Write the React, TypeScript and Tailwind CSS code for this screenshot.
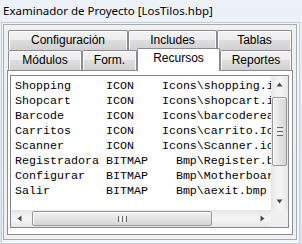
import type { ReactNode } from 'react';

const rows = [
  'Shopping     ICON    Icons\\shopping.ico',
  'Shopcart     ICON    Icons\\shopcart.ico',
  'Barcode      ICON    Icons\\barcodereader.ico',
  'Carritos     ICON    Icons\\carrito.Ico',
  'Scanner      ICON    Icons\\Scanner.ico',
  'Registradora BITMAP    Bmp\\Register.bmp',
  'Configurar   BITMAP    Bmp\\Motherboard.bmp',
  'Salir        BITMAP    Bmp\\aexit.bmp',
];

const tabBase =
  'h-[20px] shrink-0 border border-b-0 border-[#898c95] rounded-t-[2px] text-center text-[12px] leading-[19px] bg-[linear-gradient(to_bottom,#f3f3f3_0%,#ebebeb_50%,#dedede_50%,#d0d0d0_100%)] shadow-[inset_1px_1px_0_#fbfbfb,inset_-1px_0_0_#fbfbfb]';

function Tab({ className, children }: { className: string; children: ReactNode }) {
  return <div className={`${tabBase} ${className}`}>{children}</div>;
}

function Arrow({ dir }: { dir: 'up' | 'down' | 'left' | 'right' }) {
  const d = {
    up: 'M0.5 4.5 L3.5 0.5 L6.5 4.5 Z',
    down: 'M0.5 0.5 L3.5 4.5 L6.5 0.5 Z',
    left: 'M4.5 0.5 L0.5 3.5 L4.5 6.5 Z',
    right: 'M0.5 0.5 L4.5 3.5 L0.5 6.5 Z',
  }[dir];
  const vertical = dir === 'up' || dir === 'down';
  return (
    <svg width={vertical ? 7 : 5} height={vertical ? 5 : 7} viewBox={vertical ? '0 0 7 5' : '0 0 5 7'}>
      <path d={d} fill="#4a4a4a" />
    </svg>
  );
}

export default function App() {
  return (
    <div className="w-[302px] h-[244px] overflow-hidden bg-[linear-gradient(to_bottom,#edf2f8,#dde6f0)] font-['Liberation_Sans',Arial,sans-serif] text-black">
      <div className="h-[22px] pl-[3px] text-[11.5px] leading-[22px] whitespace-nowrap font-['Noto_Sans','Liberation_Sans',sans-serif]">
        Examinador de Proyecto [LosTilos.hbp]
      </div>

      <div className="ml-[1px] w-[299px] h-[222px] border border-[#c3cbd4] bg-[#f4f7fa] pt-[1px] pl-[1px] pr-[2px] pb-[3px]">
        <div className="h-full border border-[#a5abb2] bg-[#f0f0f0] pt-[5px] pl-[3px] pr-[3px]">
          {/* tab rows */}
          <div className="flex ml-[1px]">
            <Tab className="w-[120px]">Configuración</Tab>
            <Tab className="w-[89px]">Includes</Tab>
            <Tab className="w-[75px]">Tablas</Tab>
          </div>
          <div className="flex h-[20px] ml-[1px] items-start">
            <Tab className="w-[74px]">Módulos</Tab>
            <Tab className="w-[55px]">Form.</Tab>
            <div className="relative z-10 -mt-[2px] w-[83px] h-[23px] shrink-0 border border-b-0 border-[#898c95] rounded-t-[2px] bg-white text-center text-[12px] leading-[18px]">
              Recursos
            </div>
            <Tab className="w-[72px]">Reportes</Tab>
          </div>

          {/* panel */}
          <div className="h-[165px] border border-[#898c95] bg-white pt-[4px] pl-[2px] pr-[3px]">
            <div className="h-[153px] border border-[#828790] grid grid-cols-[1fr_17px] grid-rows-[1fr_17px] font-['Liberation_Mono','Courier_New',monospace] text-[11.67px] leading-[15px]">
              <div className="overflow-hidden pl-[4px] pt-[3px] bg-white">
                {rows.map((r) => (
                  <div key={r} className="whitespace-pre">
                    {r}
                  </div>
                ))}
              </div>

              {/* vertical scrollbar */}
              <div className="flex flex-col bg-[linear-gradient(to_right,#e6e6e6,#f4f4f4_40%,#f4f4f4_60%,#e6e6e6)]">
                <div className="h-[17px] flex items-center justify-center">
                  <Arrow dir="up" />
                </div>
                <div className="flex-1 pt-[4px] pl-[1px] pr-[1px]">
                  <div className="h-[69px] rounded-[2px] border border-[#979797] bg-[linear-gradient(to_right,#f2f2f2,#e4e4e4_50%,#d6d6d6)] shadow-[inset_1px_1px_0_#fdfdfd] flex flex-col items-center justify-center gap-[1px]">
                    <div className="w-[6px] h-[1px] bg-[#6a6a6a]" />
                    <div className="w-[6px] h-[1px] bg-[#fafafa]" />
                    <div className="w-[6px] h-[1px] bg-[#6a6a6a]" />
                    <div className="w-[6px] h-[1px] bg-[#fafafa]" />
                    <div className="w-[6px] h-[1px] bg-[#6a6a6a]" />
                  </div>
                </div>
                <div className="h-[17px] flex items-center justify-center">
                  <Arrow dir="down" />
                </div>
              </div>

              {/* horizontal scrollbar */}
              <div className="flex bg-[linear-gradient(to_bottom,#e6e6e6,#f4f4f4_40%,#f4f4f4_60%,#e6e6e6)]">
                <div className="w-[17px] flex items-center justify-center">
                  <Arrow dir="left" />
                </div>
                <div className="flex-1 pl-[4px] pt-[1px] pb-[1px]">
                  <div className="w-[180px] h-full rounded-[2px] border border-[#979797] bg-[linear-gradient(to_bottom,#f2f2f2,#e4e4e4_50%,#d6d6d6)] shadow-[inset_1px_1px_0_#fdfdfd] flex items-center justify-center gap-[1px]">
                    <div className="h-[6px] w-[1px] bg-[#6a6a6a]" />
                    <div className="h-[6px] w-[1px] bg-[#fafafa]" />
                    <div className="h-[6px] w-[1px] bg-[#6a6a6a]" />
                    <div className="h-[6px] w-[1px] bg-[#fafafa]" />
                    <div className="h-[6px] w-[1px] bg-[#6a6a6a]" />
                  </div>
                </div>
                <div className="w-[17px] flex items-center justify-center">
                  <Arrow dir="right" />
                </div>
              </div>
              <div className="bg-[#f0f0f0]" />
            </div>
          </div>
        </div>
      </div>
    </div>
  );
}
